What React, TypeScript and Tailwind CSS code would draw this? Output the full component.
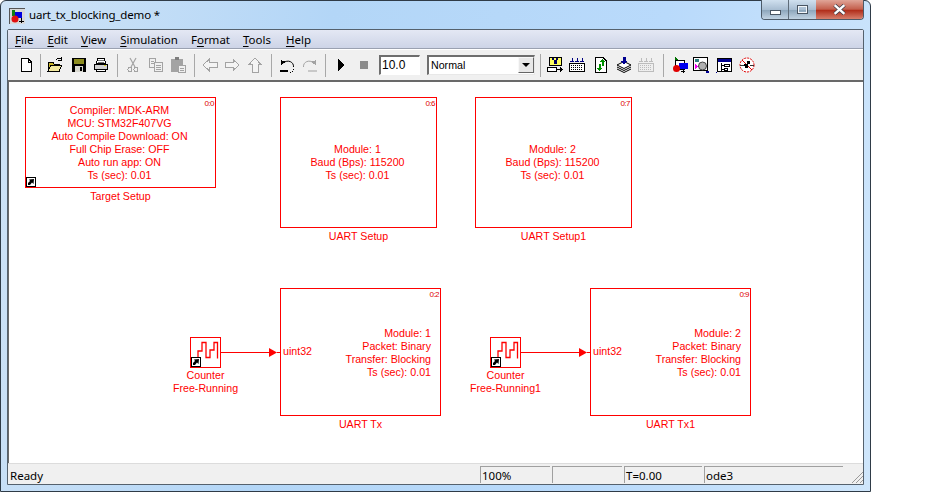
import React from 'react';

const uiFont = "font-['Noto_Sans',sans-serif]";
const blockFont = "font-['Liberation_Sans',Arial,sans-serif]";

const Ico: React.FC<{ className?: string; children: React.ReactNode }> = ({ className = '', children }) => (
  <svg viewBox="0 0 16 16" shapeRendering="crispEdges" className={`w-4 h-4 shrink-0 ${className}`}>
    {children}
  </svg>
);

const Sep: React.FC<{ className?: string }> = ({ className = '' }) => (
  <div className={`w-px h-[23px] bg-[#a8a8a8] shrink-0 ${className}`} />
);

const grey = '#a3a3a3';

const Menu: React.FC<{ k: string; rest: string; before?: string; className?: string }> = ({ k, rest, before = '', className = '' }) => (
  <span className={className}>
    {before}
    <span className="underline underline-offset-2">{k}</span>
    {rest}
  </span>
);

const Shortcut = () => (
  <div className="absolute left-0 bottom-0 w-[10px] h-[10px] bg-white border border-black">
    <svg viewBox="0 0 8 8" className="w-2 h-2 block">
      <path d="M1 7 L1 5 L3 3 L2 1.500 L7 1 L6.500 6 L5 4.500 L3 7 Z" fill="#000" />
    </svg>
  </div>
);

const Block: React.FC<{
  className: string;
  index?: string;
  label: React.ReactNode;
  labelClass?: string;
  children?: React.ReactNode;
}> = ({ className, index, label, labelClass = 'top-full mt-[3px]', children }) => (
  <div className={`absolute border border-[#f00] bg-white text-[#f00] text-[10.67px] leading-[13px] ${className}`}>
    {index && <span className="absolute top-[1px] right-[1px] text-[8px] leading-[10px] tracking-[-0.5px] text-[#e00000]">{index}</span>}
    {children}
    <div className={`absolute left-1/2 -translate-x-1/2 whitespace-nowrap text-center ${labelClass}`}>{label}</div>
  </div>
);

const Wire: React.FC<{ className: string }> = ({ className }) => (
  <div className={`absolute h-[11px] flex items-center ${className}`}>
    <div className="flex-1 h-px bg-[#f00]" />
    <svg viewBox="0 0 8 11" className="w-2 h-[11px] shrink-0">
      <path d="M0 1 L8 5.500 L0 10 Z" fill="#f00" />
    </svg>
    <div className="w-[3px] h-px bg-[#f00] shrink-0" />
  </div>
);

const Counter = () => (
  <>
    <svg viewBox="0 0 29 29" className="absolute inset-0 w-[29px] h-[29px]">
      <path d="M4 20.500 H7 V13 H11 V4.500 H15 V19.500 H19 V12 H23 V4.500 H26.500 V20.500" fill="none" stroke="#f00" strokeWidth="1.300" />
    </svg>
    <Shortcut />
  </>
);

const UartTx: React.FC<{ module: string }> = ({ module }) => (
  <>
    <span className="absolute left-[2px] top-[56px]">uint32</span>
    <div className="h-full flex flex-col justify-center items-end pr-[9px] pt-[1px]">
      <div>Module: {module}</div>
      <div>Packet: Binary</div>
      <div>Transfer: Blocking</div>
      <div>Ts (sec): 0.01</div>
    </div>
  </>
);

const Lines: React.FC<{ lines: string[] }> = ({ lines }) => (
  <div className="h-full flex flex-col justify-center items-center pr-[2px]">
    {lines.map((l) => (
      <div key={l} className="whitespace-nowrap">{l}</div>
    ))}
  </div>
);

const Pane: React.FC<{ className: string; children?: React.ReactNode }> = ({ className, children }) => (
  <div className={`h-[17px] border-t border-l border-[#a0a0a0] pl-[1px] pt-[1px] text-[11.5px] leading-[16px] shrink-0 ${className}`}>
    {children}
  </div>
);

const App: React.FC = () => {
  return (
    <div className="w-[950px] h-[492px] bg-white overflow-hidden">
      <div className={`w-[871px] h-[492px] flex flex-col border border-[#2f3b47] rounded-t-[6px] bg-[linear-gradient(100deg,#cfe3f6_0%,#b3d6f7_35%,#b9dafb_70%,#cfe6fb_100%)] ${uiFont} text-black`}>
        {/* title bar */}
        <div className="h-[28px] shrink-0 flex items-start relative">
          <svg viewBox="0 0 16 16" shapeRendering="crispEdges" className="w-[16px] h-[16px] ml-[8px] mt-[7px] shrink-0">
            <rect x="0" y="0" width="16" height="16" fill="#d8d8d8" stroke="#555" />
            <path d="M3 2 L6 2 L6 8 L3 8 Z" fill="#108010" />
            <rect x="6" y="4" width="7" height="6" fill="#0000e0" />
            <circle cx="6" cy="11" r="3.500" fill="#e01010" shapeRendering="auto" />
            <path d="M12 10 V15 M10 13 H15" stroke="#000" />
          </svg>
          <span className="ml-[4px] mt-[5px] text-[11.5px] tracking-[-0.15px] leading-[18px] whitespace-nowrap">uart_tx_blocking_demo *</span>
          <div className="ml-auto mr-[6px] flex h-[20px] -mt-[1px] border border-t-0 border-[#4c5a68] rounded-b-[4px] overflow-hidden shrink-0">
            <div className="w-[27px] flex items-center justify-center border-r border-[#5f6d7a] bg-[linear-gradient(#d0e0ef,#a9bed2_50%,#8ea7bc_55%,#c1d3e3)]">
              <div className="w-[11px] h-[5px] mt-[5px] bg-white border border-[#4a5663]" />
            </div>
            <div className="w-[27px] flex items-center justify-center bg-[linear-gradient(#d0e0ef,#a9bed2_50%,#8ea7bc_55%,#c1d3e3)]">
              <div className="w-[11px] h-[9px] border-2 border-[#f2f6fa] outline outline-1 outline-[#4a5663] -outline-offset-1" />
            </div>
            <div className="w-[47px] flex items-center justify-center bg-[linear-gradient(#e0a598,#c4604d_48%,#b12f1c_55%,#d77f6c)]">
              <svg viewBox="0 0 12 10" className="w-[13px] h-[11px]">
                <path d="M1.500 1 L10.500 9 M10.500 1 L1.500 9" stroke="#3f3f4a" strokeWidth="3.600" />
                <path d="M1.500 1 L10.500 9 M10.500 1 L1.500 9" stroke="#fff" strokeWidth="2.200" />
              </svg>
            </div>
          </div>
        </div>

        {/* client area */}
        <div className="flex-1 min-h-0 mx-[6px] flex flex-col border border-[#55616d] rounded-t-[2px] bg-[#f0f0f0]">
          <div className="h-[19px] shrink-0 flex items-center pl-[7px] pt-[1px] text-[11.5px] leading-[18px] whitespace-nowrap bg-[linear-gradient(#e4e8f4,#cdd4e7)] border-b border-[#9aa1b1]">
            <Menu k="F" rest="ile" />
            <Menu k="E" rest="dit" className="ml-[14px]" />
            <Menu k="V" rest="iew" className="ml-[13px]" />
            <Menu k="S" rest="imulation" className="ml-[14px]" />
            <Menu k="o" before="F" rest="rmat" className="ml-[13px]" />
            <Menu k="T" rest="ools" className="ml-[13px]" />
            <Menu k="H" rest="elp" className="ml-[15px]" />
          </div>

          {/* toolbar */}
          <div className="h-[31px] shrink-0 flex items-center pl-[10px] border-t border-white bg-[#f0f0f0]">
            <Ico>
              <path d="M3.500 1.500 H10 L13.500 5 V14.500 H3.500 Z" fill="#fff" stroke="#000" />
              <path d="M10 1.500 V5 H13.500" fill="none" stroke="#000" />
            </Ico>
            <Sep className="ml-[6px]" />
            <Ico className="ml-[6px]">
              <path d="M1 5 H6 L7 7 H12 V14 H1 Z" fill="#c8b428" stroke="#000" />
              <path d="M1 14 L4 8 H15 L12 14 Z" fill="#f2e9a0" stroke="#000" />
              <path d="M9 3 Q11 0 14 2 M14 0 V3 H11" fill="none" stroke="#000" />
            </Ico>
            <Ico className="ml-[8px]">
              <rect x="1" y="1" width="14" height="14" fill="#000" />
              <rect x="3" y="2" width="10" height="5" fill="#8d8d20" />
              <rect x="4" y="9" width="8" height="6" fill="#d8d8d0" />
              <rect x="9" y="10" width="2" height="4" fill="#000" />
            </Ico>
            <Ico className="ml-[6px]">
              <path d="M4.500 1.500 H11.500 L12.500 6.500 H3.500 Z" fill="#fff" stroke="#000" />
              <path d="M1.500 7 H14.500 V12.500 H1.500 Z" fill="#d0d0d0" stroke="#000" />
              <path d="M3.500 12.500 H12.500 V14.500 H3.500 Z" fill="#fff" stroke="#000" />
              <path d="M5 3 H11 M5 5 H11" stroke="#777" />
              <rect x="11" y="8" width="2" height="1" fill="#d8d020" />
            </Ico>
            <Sep className="ml-[8px]" />
            <Ico className="ml-[7px]">
              <path d="M5 1 L10 10 M11 1 L6 10" stroke={grey} strokeWidth="1.200" shapeRendering="auto" />
              <circle cx="5" cy="12.500" r="2" fill="none" stroke={grey} />
              <circle cx="11" cy="12.500" r="2" fill="none" stroke={grey} />
            </Ico>
            <Ico className="ml-[7px]">
              <path d="M1.500 1.500 H7.500 V10.500 H1.500 Z" fill="#f0f0f0" stroke={grey} />
              <path d="M6.500 5.500 H14.500 V14.500 H6.500 Z" fill="#f0f0f0" stroke={grey} />
              <path d="M3 4 H6 M3 6 H6 M8 8 H13 M8 10 H13 M8 12 H13" stroke={grey} />
            </Ico>
            <Ico className="ml-[6px]">
              <rect x="1" y="2" width="12" height="13" rx="1" fill={grey} />
              <rect x="5" y="0" width="4" height="3" fill="#7e7e7e" />
              <path d="M8.500 8.500 H15.500 V15.500 H8.500 Z" fill="#f0f0f0" stroke={grey} />
              <path d="M10 11 H14 M10 13 H14" stroke={grey} />
            </Ico>
            <Sep className="ml-[8px]" />
            <Ico className="ml-[7px]">
              <path d="M1 8 L7 2.500 V5.500 H15 V10.500 H7 V13.500 Z" fill="#f4f4f4" stroke={grey} />
            </Ico>
            <Ico className="ml-[6px]">
              <path d="M15 8 L9 2.500 V5.500 H1 V10.500 H9 V13.500 Z" fill="#f4f4f4" stroke={grey} />
            </Ico>
            <Ico className="ml-[7px]">
              <path d="M8 1 L14 7.500 H11 V15 H5 V7.500 H2 Z" fill="#f4f4f4" stroke={grey} />
            </Ico>
            <Sep className="ml-[8px]" />
            <Ico className="ml-[7px]">
              <path d="M1 13 H9 V15 H1 Z" fill="#000" />
              <path d="M11 15 H12 M13 14 H14 M14 12 H15" stroke="#000" />
              <path d="M14.500 10 C15 5 9 2 4 6" fill="none" stroke="#000" shapeRendering="auto" />
              <path d="M2 3 L7 5 L2 8 Z" fill="#000" />
            </Ico>
            <Ico className="ml-[7px]">
              <path d="M6 13 H15 V15 H6 Z" fill="#c8c8c8" />
              <path d="M1.500 10 C1 5 7 2 12 6" fill="none" stroke={grey} shapeRendering="auto" />
              <path d="M14 3 L9 5 L14 8 Z" fill={grey} />
            </Ico>
            <Sep className="ml-[7px]" />
            <Ico className="ml-[7px]">
              <path d="M5 2 L12 8 L5 14 Z" fill="#000" />
            </Ico>
            <Ico className="ml-[7px]">
              <rect x="4" y="4" width="8" height="8" fill="#8c8c8c" />
            </Ico>
            <div className={`ml-[7px] w-[41px] h-[20px] shrink-0 border border-t-2 border-l-2 border-[#6e6e6e] border-r-white border-b-white bg-white text-[12px] leading-[17px] pl-[1px] ${blockFont}`}>10.0</div>
            <div className="ml-[7px] w-[108px] h-[20px] shrink-0 flex border border-t-2 border-l-2 border-[#6e6e6e] border-r-[#e8e8e8] border-b-[#e8e8e8] bg-white text-[10.67px] leading-[17px] pl-[2px]">
              <span className={blockFont}>Normal</span>
              <div className="ml-auto w-[16px] h-[16px] flex items-center justify-center bg-[#e8e8e8] border border-[#f8f8f8] border-r-[#666] border-b-[#666]">
                <svg viewBox="0 0 8 4" className="w-2 h-1"><path d="M0 0 H8 L4 4 Z" fill="#000" /></svg>
              </div>
            </div>
            <Sep className="ml-[5px]" />
            <Ico className="ml-[6px]">
              <rect x="2" y="0" width="12" height="8" fill="#ffff60" stroke="#000" />
              <path d="M5 1 H7 V3 H9 V1 H11 V3 H9.500 V7 H6.500 V3 H5 Z" fill="#000060" />
              <rect x="0.500" y="10.500" width="9" height="4" fill="#fff" stroke="#000" />
              <path d="M10 12.500 H15 M13 10.500 L15 12.500 L13 14.500" fill="none" stroke="#000" />
            </Ico>
            <Ico className="ml-[6px]">
              <rect x="0.500" y="6.500" width="15" height="8" fill="#fff" stroke="#000" />
              <path d="M2 8.500 H14 M2 10.500 H14 M2 12.500 H14" stroke="#000" strokeDasharray="1 1" />
              <path d="M3 1 V5 M8 1 V5 M13 1 V5 M1 4 H5 M6 4 H10 M11 4 H15" stroke="#000080" />
            </Ico>
            <Ico className="ml-[8px]">
              <path d="M2.500 0.500 H10 L13.500 4 V15.500 H2.500 Z" fill="#fff" stroke="#000" />
              <path d="M9.500 2 L12 5 H10.500 V9 H8.500 V5 H7 Z M6.500 14 L4 11 H5.500 V7 H7.500 V11 H9 Z" fill="#009000" />
            </Ico>
            <Ico className="ml-[7px]">
              <path d="M1 8 L8 4.500 L15 8 L8 11.500 Z" fill="#fff" stroke="#000" shapeRendering="auto" />
              <path d="M1 10 L8 13.500 L15 10 M1 12 L8 15.500 L15 12" fill="none" stroke="#000" shapeRendering="auto" />
              <path d="M6.500 0 H9.500 V4 H11.500 L8 8 L4.500 4 H6.500 Z" fill="#000090" />
            </Ico>
            <Ico className="ml-[6px]">
              <rect x="0.500" y="6.500" width="15" height="8" fill="#eee" stroke="#bcbcbc" />
              <path d="M2 8.500 H14 M2 10.500 H14 M2 12.500 H14" stroke="#bcbcbc" strokeDasharray="1 1" />
              <path d="M3 1 V5 M8 1 V5 M13 1 V5 M1 4 H5 M6 4 H10 M11 4 H15" stroke="#bcbcbc" />
            </Ico>
            <Sep className="ml-[9px]" />
            <Ico className="ml-[8px]">
              <path d="M3 0 L6 3 H3 Z" fill="#007000" />
              <rect x="3.500" y="3.500" width="9" height="9" fill="#fff" stroke="#000" />
              <rect x="7" y="6" width="9" height="6" fill="#0000f0" />
              <circle cx="4.500" cy="11.500" r="3.500" fill="#e00000" shapeRendering="auto" />
              <path d="M11 12 V16 M9 14 H13" stroke="#000" />
            </Ico>
            <Ico className="ml-[5px]">
              <rect x="0.500" y="0.500" width="14" height="13" fill="#fff" stroke="#000" />
              <rect x="2" y="2" width="4" height="3" fill="#308080" />
              <path d="M2 7 L6 9.500 L2 12 Z" fill="#f000f0" />
              <circle cx="9.500" cy="9" r="4" fill="#b0b0b0" stroke="#444" shapeRendering="auto" />
              <rect x="13" y="14" width="3" height="2" fill="#000090" />
            </Ico>
            <Ico className="ml-[7px]">
              <rect x="1.500" y="1.500" width="14" height="13" fill="#fff" stroke="#000" />
              <rect x="2" y="2" width="13" height="3" fill="#000090" />
              <path d="M5 6 V14 M8.500 7.500 H13.500 V9.500 H8.500 Z M8.500 11.500 H11.500 V13.500 H8.500 Z M5 8 H8 M5 12 H8" fill="none" stroke="#000" />
              <rect x="0" y="15" width="1" height="1" fill="#000090" />
            </Ico>
            <Ico className="ml-[7px]">
              <circle cx="8" cy="8" r="7" fill="#fff" stroke="#e00000" strokeDasharray="2 1" shapeRendering="auto" />
              <path d="M3 3 L13 13" stroke="#e00000" shapeRendering="auto" />
              <path d="M5 7 H8 V4 H11 V7 H9 V11 H6 V9 H5 Z" fill="#000" />
              <path d="M1 8 H5 M11 8 H15" stroke="#333" />
            </Ico>
          </div>

          {/* diagram canvas */}
          <div className={`relative flex-1 min-h-0 bg-white border-t-2 border-l border-[#696969] ${blockFont}`}>
            <Block className="left-[16px] top-[15px] w-[191px] h-[91px]" index="0:0" label="Target Setup">
              <Lines lines={['Compiler: MDK-ARM', 'MCU: STM32F407VG', 'Auto Compile Download: ON', 'Full Chip Erase: OFF', 'Auto run app: ON', 'Ts (sec): 0.01']} />
              <Shortcut />
            </Block>
            <Block className="left-[271px] top-[15px] w-[157px] h-[131px]" index="0:6" label="UART Setup">
              <Lines lines={['Module: 1', 'Baud (Bps): 115200', 'Ts (sec): 0.01']} />
            </Block>
            <Block className="left-[466px] top-[15px] w-[157px] h-[131px]" index="0:7" label="UART Setup1">
              <Lines lines={['Module: 2', 'Baud (Bps): 115200', 'Ts (sec): 0.01']} />
            </Block>
            <Block className="left-[181px] top-[255px] w-[31px] h-[31px]" labelClass="top-full mt-[2px]" label={<>Counter<br />Free-Running</>}>
              <Counter />
            </Block>
            <Wire className="left-[212px] top-[265px] w-[59px]" />
            <Block className="left-[271px] top-[206px] w-[161px] h-[128px]" index="0:2" label="UART Tx">
              <UartTx module="1" />
            </Block>
            <Block className="left-[481px] top-[255px] w-[31px] h-[31px]" labelClass="top-full mt-[2px]" label={<>Counter<br />Free-Running1</>}>
              <Counter />
            </Block>
            <Wire className="left-[512px] top-[265px] w-[69px]" />
            <Block className="left-[581px] top-[206px] w-[161px] h-[128px]" index="0:9" label="UART Tx1">
              <UartTx module="2" />
            </Block>
          </div>

          {/* status bar */}
          <div className="h-[21px] shrink-0 flex items-end pb-[1px] border-t border-[#dcdcdc] bg-[#f0f0f0] relative">
            <span className="ml-[2px] self-end text-[11.5px] leading-[16px] translate-y-[1px]">Ready</span>
            <Pane className="ml-auto w-[70px]">100%</Pane>
            <Pane className="ml-[2px] w-[70px]" />
            <Pane className="ml-[2px] w-[78px]">T=0.00</Pane>
            <Pane className="ml-[2px] w-[139px] mr-[20px]">ode3</Pane>
            <svg viewBox="0 0 12 12" className="absolute right-0 bottom-[1px] w-3 h-3">
              <path d="M1 12 L12 1 M5 12 L12 5 M9 12 L12 9" stroke="#9a9a9a" />
            </svg>
          </div>
        </div>
        <div className="h-[6px] shrink-0" />
      </div>
    </div>
  );
};

export default App;
